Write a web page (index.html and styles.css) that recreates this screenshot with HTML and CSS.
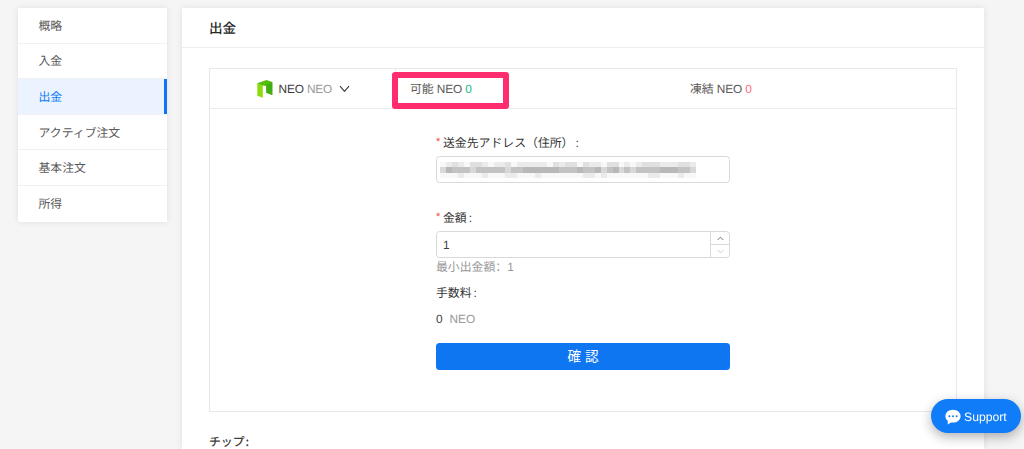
FILE: index.html
```html
<!DOCTYPE html>
<html lang="ja">
<head>
<meta charset="utf-8">
<title>出金</title>
<link rel="stylesheet" href="styles.css">
</head>
<body>
<div class="page">
  <nav class="menu">
    <a class="menu-item">概略</a>
    <a class="menu-item">入金</a>
    <a class="menu-item active">出金</a>
    <a class="menu-item">アクティブ注文</a>
    <a class="menu-item">基本注文</a>
    <a class="menu-item">所得</a>
  </nav>
  <main class="panel">
    <h1 class="title">出金</h1>
    <section class="card">
      <div class="balances">
        <div class="coin">
          <svg class="coin-logo" width="16" height="18" viewBox="0 0 16 18">
            <path fill="#8cdc0c" d="M.3 3.1 5.8 5.2V17.7L.3 15.7Z"/>
            <path fill="#54bd08" d="M.3 3.2 9.5 0 15.3 2.1V15L9.3 12.8V6L5.8 5.4Z"/>
            <path fill="#3fae12" d="M15.3 2.4V15L9.3 12.8V4.4Z"/>
          </svg>
          <span class="coin-name">NEO <span class="muted">NEO</span></span>
          <svg class="chevron" width="11" height="8" viewBox="0 0 11 8"><path d="M1 1.2 5.5 6.3 10 1.2"/></svg>
        </div>
        <div class="available">可能 NEO <span class="green">0</span><span class="highlight"></span></div>
        <div class="frozen">凍結 NEO <span class="red">0</span></div>
      </div>
      <form class="form">
        <label class="label"><span class="required">*</span>送金先アドレス（住所）<span class="colon">:</span></label>
        <div class="input address">
          <svg id="mosaic" class="mosaic" width="268" height="20" viewBox="0 0 268 20" shape-rendering="crispEdges"></svg>
        </div>
        <label class="label amount-label"><span class="required">*</span>金額<span class="colon">:</span></label>
        <div class="input amount">
          <span class="value">1</span>
          <span class="stepper">
            <span class="step"><svg width="7" height="5" viewBox="0 0 7 5"><path d="M.7 4 3.5 1.1 6.3 4"/></svg></span>
            <span class="step disabled"><svg width="7" height="5" viewBox="0 0 7 5"><path d="M.7 1 3.5 3.9 6.3 1"/></svg></span>
          </span>
        </div>
        <div class="hint">最小出金額<span lang="zh-CN" class="wide-colon">：</span>1</div>
        <div class="fee-label">手数料<span class="colon">:</span></div>
        <div class="fee">0<span class="unit">NEO</span></div>
        <button type="button" class="submit">確 認</button>
      </form>
    </section>
    <h2 class="tips">チップ<span class="colon">:</span></h2>
  </main>
</div>
<div class="support">
  <svg width="16" height="16" viewBox="0 0 16 16">
    <path fill="#fff" d="M8 .8C3.7.8.4 3.6.4 7.2c0 2 1 3.7 2.5 4.8L2.6 15.5 6 13.4c.6.1 1.3.2 2 .2 4.3 0 7.6-2.8 7.6-6.4S12.3.8 8 .8Z"/>
    <g fill="#117cf8"><circle cx="4.4" cy="7.2" r="1"/><circle cx="8" cy="7.2" r="1"/><circle cx="11.6" cy="7.2" r="1"/></g>
  </svg>
  <span>Support</span>
</div>
<script src="mosaic.js"></script>
</body>
</html>
```
FILE: styles.css
```css
* { box-sizing: border-box; }
body {
  margin: 0;
  height: 449px;
  overflow: hidden;
  background: #f5f5f5;
  color: #595959;
  font: 11.87px/18px "Liberation Sans", "Noto Sans CJK JP", sans-serif;
  text-rendering: geometricPrecision;
}
.page { display: flex; align-items: flex-start; gap: 15px; padding: 8px 40px 0 18px; }
.menu { width: 149px; background: #fff; box-shadow: 0 0 7px rgba(0, 0, 0, .09); }
.menu-item {
  display: flex;
  align-items: center;
  height: 35.6px;
  padding: 1px 0 0 20.5px;
  border-bottom: 1px solid #f1f1f1;
}
.menu-item:last-child { border-bottom: 0; }
.menu-item.active { background: #eaf3ff; color: #107bf5; box-shadow: inset -3px 0 #0f76f2; }
.panel { width: 802px; height: 441px; background: #fff; box-shadow: 0 0 7px rgba(0, 0, 0, .09); }
.title {
  margin: 0;
  height: 40px;
  padding: 0 27px;
  border-bottom: 1px solid #eee;
  color: #262626;
  font-size: 13.6px;
  font-weight: 500;
  font-family: "Noto Sans CJK JP", sans-serif;
  line-height: 38px;
}
.card { margin: 20px 27px 0; height: 344px; border: 1px solid #e8e8e8; }
.balances { display: flex; align-items: center; height: 40px; border-bottom: 1px solid #ebebeb; }
.coin {
  display: flex;
  align-items: center;
  width: 186px;
  height: 39px;
  padding-left: 47px;
  border-right: 1px solid #eee;
}
.coin-name { margin-left: 5.5px; color: #404040; letter-spacing: -.15px; }
.muted { color: #999; }
.chevron { margin-left: 7px; fill: none; stroke: #404040; stroke-width: 1.2; }
.available { position: relative; width: 294px; padding-left: 14px; letter-spacing: -.1px; }
.frozen { letter-spacing: -.1px; }
.highlight {
  position: absolute;
  left: -4px;
  top: -8px;
  width: 117px;
  height: 37px;
  border: 6px solid #ff2d6d;
  border-radius: 3px;
}
.green { color: #12b886; }
.red { color: #ff6b7e; }
.form { display: flex; flex-direction: column; width: 294px; margin: 24px 0 0 226px; }
.label { display: flex; height: 23px; color: #333; line-height: 20px; }
.required { width: 7px; color: #f5483b; font-size: 11px; line-height: 18px; }
.colon { margin-left: 2px; }
.input {
  display: flex;
  height: 27px;
  border: 1px solid #d9d9d9;
  border-radius: 3.5px;
  overflow: hidden;
}
.mosaic { display: block; margin: 4px 0 0 3px; }
.amount-label { margin-top: 25px; }
.value { flex: 1; padding-left: 6px; color: #404040; line-height: 26px; }
.stepper { display: flex; flex-direction: column; width: 19px; border-left: 1px solid #d9d9d9; }
.step { display: flex; flex: 1; align-items: center; justify-content: center; }
.step + .step { border-top: 1px solid #d9d9d9; }
.step svg { fill: none; stroke: #777; stroke-width: 1; }
.step.disabled svg { stroke: #ccc; }
.hint { color: #999; }
.wide-colon { font-family: "Noto Sans CJK SC", sans-serif; }
.fee-label { margin-top: 8px; color: #333; }
.fee { margin-top: 8px; color: #404040; }
.unit { margin-left: 7px; color: #999; letter-spacing: -.1px; }
.submit {
  height: 27px;
  margin-top: 15px;
  padding: 0;
  border: 0;
  border-radius: 3.5px;
  background: #0f76f2;
  color: #fff;
  font: 13.6px/27px "Liberation Sans", "Noto Sans CJK JP", sans-serif;
}
.tips { margin: 21px 27px 0; color: #404040; font: 500 11.87px/18px "Noto Sans CJK JP", sans-serif; }
.tips .colon { margin-left: 1px; }
.support {
  position: fixed;
  left: 931px;
  top: 399px;
  display: flex;
  align-items: center;
  gap: 3px;
  width: 90px;
  height: 34px;
  padding: 1px 0 0 14px;
  border-radius: 17px;
  background: #117cf8;
  box-shadow: 0 4px 12px rgba(0, 0, 0, .3);
  color: #fff;
  font-size: 12.2px;
}
```
FILE: mosaic.js
```js
// Pixelated mask over the address: one letter of grey per cell.
const rows = [
  { y: 1, h: 5, cells: "fedefddefeedfeeeeefdeddfdeefddfefedddeeeddee" },
  { y: 6, h: 6, cells: "dbcccdcccccdccbbbbbbcccbccbdcbdcdccccbbbccd" },
  { y: 12, h: 5, cells: "fffefffefffeefffefffffffeefefffffffeefffeff" }
];
const tones = { b: "#b8b8b8", c: "#c3c3c3", d: "#d8d8d8", e: "#ebebeb", f: "#f8f8f8" };
const svg = document.getElementById("mosaic");
for (const row of rows) {
  [...row.cells].slice(0, 43).forEach((tone, i) => {
    const rect = document.createElementNS("http://www.w3.org/2000/svg", "rect");
    const fill = row.h === 5 && tone === "d" ? "#e0e0e0" : tones[tone];
    rect.setAttribute("x", i * 5.95);
    rect.setAttribute("y", row.y);
    rect.setAttribute("width", 6);
    rect.setAttribute("height", row.h);
    rect.setAttribute("fill", fill);
    svg.append(rect);
  });
}
```
